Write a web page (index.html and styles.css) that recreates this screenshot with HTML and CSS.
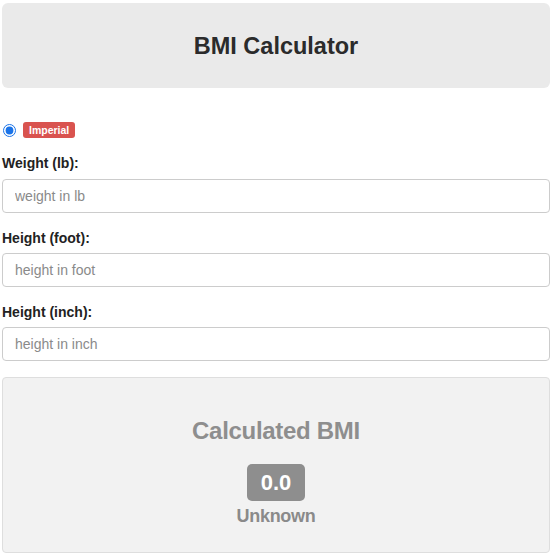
FILE: index.html
```html
<!DOCTYPE html>
<html>
<head>
<meta charset="utf-8">
<link rel="stylesheet" href="styles.css">
</head>
<body>
<div class="page">
  <header class="hero"><h1>BMI Calculator</h1></header>
  <div class="unit-row">
    <input type="radio" name="unit" checked class="radio">
    <span class="unit-badge">Imperial</span>
  </div>
  <div class="group">
    <label class="lbl">Weight (lb):</label>
    <input class="field" type="text" placeholder="weight in lb">
  </div>
  <div class="group">
    <label class="lbl">Height (foot):</label>
    <input class="field" type="text" placeholder="height in foot">
  </div>
  <div class="group">
    <label class="lbl">Height (inch):</label>
    <input class="field" type="text" placeholder="height in inch">
  </div>
  <section class="result">
    <h2 class="result-title">Calculated BMI</h2>
    <span class="bmi-value">0.0</span>
    <div class="bmi-status">Unknown</div>
  </section>
</div>
</body>
</html>
```
FILE: styles.css
```css
* { box-sizing: border-box; }
html, body { margin: 0; padding: 0; background: #fff; }
body {
  font-family: "Liberation Sans", Arial, Helvetica, sans-serif;
  font-size: 14px;
  line-height: 20px;
  color: #333;
}
.page {
  width: 548px;
  margin-left: 2px;
  padding-top: 3px;
}
.hero {
  background: #eaeaea;
  border-radius: 6px;
  height: 85px;
  display: flex;
  align-items: center;
  justify-content: center;
}
.hero h1 {
  margin: 0;
  font-size: 23.5px;
  font-weight: bold;
  color: #2b2b2b;
  line-height: 28px;
}
.unit-row {
  margin-top: 32px;
  height: 20px;
  display: flex;
  align-items: center;
  gap: 7px;
  margin-bottom: 13px;
}
.radio {
  margin: 0 0 0 1px;
  width: 13px;
  height: 13px;
  accent-color: #1a73e8;
}
.unit-badge {
  background: #d9534f;
  color: #fff;
  font-size: 10.5px;
  font-weight: bold;
  line-height: 16px;
  padding: 0 6px;
  border-radius: 3px;
}
.group { margin-bottom: 15px; }
.lbl {
  display: block;
  font-weight: bold;
  margin-bottom: 6px;
  color: #222;
}
.group + .group .lbl { margin-bottom: 5px; }
.field {
  display: block;
  width: 100%;
  height: 34px;
  padding: 6px 12px;
  font-family: inherit;
  font-size: 14px;
  border: 1px solid #ccc;
  border-radius: 4px;
  color: #555;
  background: #fff;
  outline: none;
}
.field::placeholder { color: #8a8a8a; }
.result {
  margin-top: 16px;
  height: 176px;
  background: #f2f2f2;
  border: 1px solid #dedede;
  border-radius: 4px;
  display: flex;
  flex-direction: column;
  align-items: center;
  padding-top: 39px;
}
.result-title {
  margin: 0;
  font-size: 24px;
  line-height: 28px;
  font-weight: bold;
  color: #8e8e8e;
  letter-spacing: -0.3px;
}
.bmi-value {
  margin-top: 19px;
  background: #8e8e8e;
  color: #fff;
  font-weight: bold;
  font-size: 22px;
  line-height: 37px;
  padding: 0 14px;
  border-radius: 5px;
}
.bmi-status {
  margin-top: 4px;
  font-size: 18px;
  line-height: 22px;
  color: #8a8a8a;
  font-weight: bold;
  letter-spacing: -0.3px;
}
```
